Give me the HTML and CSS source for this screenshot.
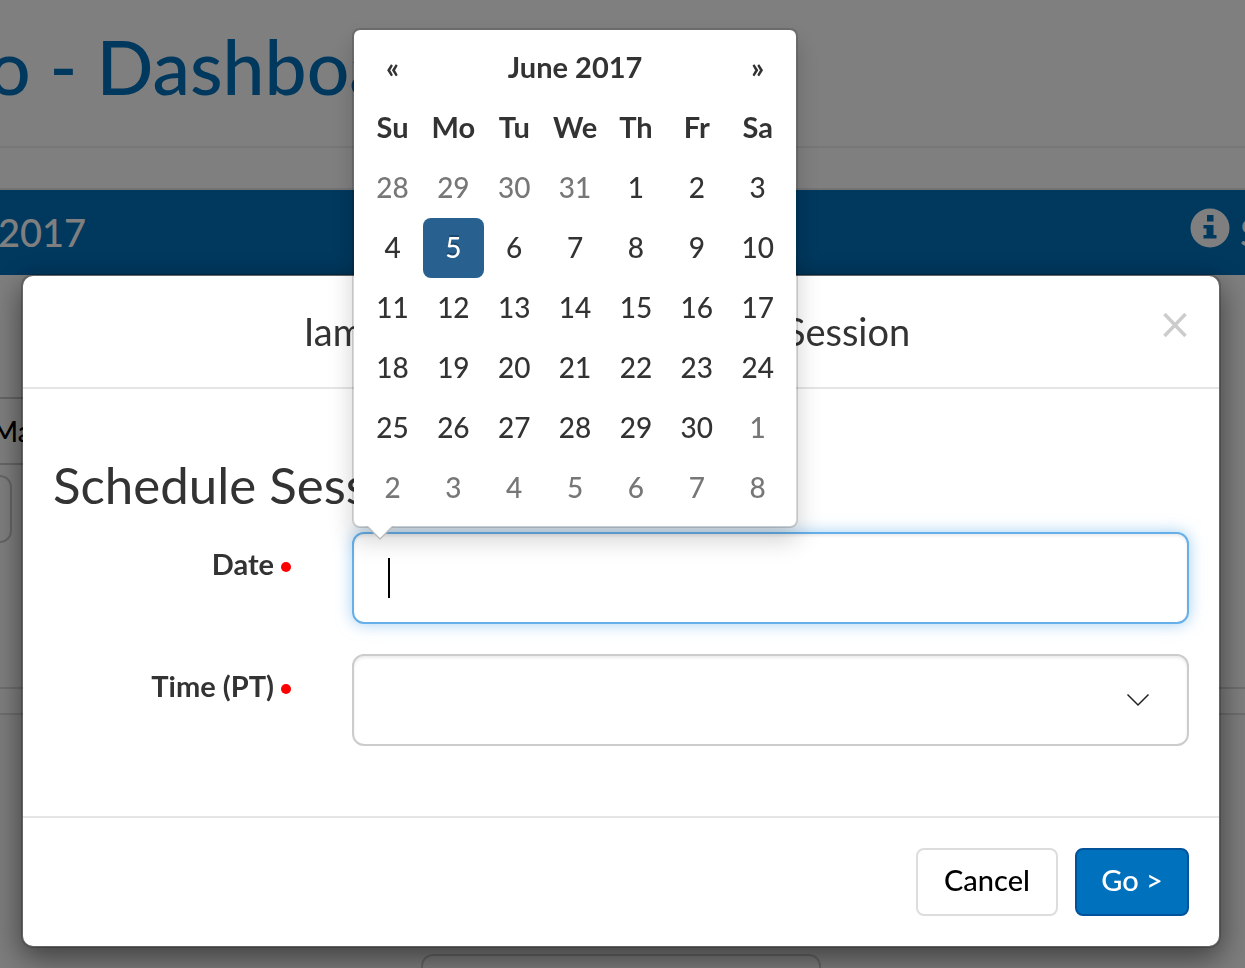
FILE: index.html
```html
<!DOCTYPE html>
<html lang="en">
<head>
    <meta charset="UTF-8">
    <meta name="viewport" content="width=device-width, initial-scale=1.0">
    <title>Dashboard - Schedule Session</title>
    <link rel="stylesheet" href="styles.css">
</head>
<body>
    <!-- Dashboard behind the modal -->
    <div class="page">
        <header class="page-header">
            <h1>o - Dashboard</h1>
        </header>
        <div class="week-bar">
            <span>2017</span>
            <span class="week-info">
                <svg class="info-icon" viewBox="0 0 40 40" aria-hidden="true">
                    <circle cx="20" cy="20" r="19.5" fill="#fff"/>
                    <path fill="#0071bc" d="M17 7h6.500v6.500H17zM13.500 17h10v10h3v3.500H13.500V27h3v-6.500h-3z"/>
                </svg>
                Session
            </span>
        </div>
        <section class="panel">
            <div class="panel-row">Manage</div>
            <div class="panel-box"></div>
        </section>
        <div class="panel-gap"></div>
        <section class="panel-lower">
            <div class="lower-box"></div>
        </section>
    </div>

    <!-- Schedule session modal -->
    <div class="modal">
        <div class="modal-content" role="dialog" aria-labelledby="modal-title">
            <div class="modal-header">
                <h2 id="modal-title">Iamdemo Users - Schedule a Session</h2>
                <button type="button" class="close" aria-label="Close">
                    <svg viewBox="0 0 24 24" aria-hidden="true">
                        <path d="M1.500 1 22.500 23M22.500 1 1.500 23" stroke="#ccc" stroke-width="3.500"/>
                    </svg>
                </button>
            </div>
            <form id="session-form" class="modal-body">
                <h3>Schedule Session</h3>
                <div class="form-group">
                    <label for="date">Date <span class="required"></span></label>
                    <div class="field">
                        <input type="text" id="date" class="form-control focused" autocomplete="off">

                        <!-- Datepicker -->
                        <div class="datepicker">
                            <table>
                                <thead>
                                    <tr>
                                        <th><button type="button" aria-label="Previous month">«</button></th>
                                        <th colspan="5"><button type="button">June 2017</button></th>
                                        <th><button type="button" aria-label="Next month">»</button></th>
                                    </tr>
                                    <tr>
                                        <th>Su</th>
                                        <th>Mo</th>
                                        <th>Tu</th>
                                        <th>We</th>
                                        <th>Th</th>
                                        <th>Fr</th>
                                        <th>Sa</th>
                                    </tr>
                                </thead>
                                <tbody>
                                    <tr>
                                        <td><button type="button" class="other">28</button></td>
                                        <td><button type="button" class="other">29</button></td>
                                        <td><button type="button" class="other">30</button></td>
                                        <td><button type="button" class="other">31</button></td>
                                        <td><button type="button">1</button></td>
                                        <td><button type="button">2</button></td>
                                        <td><button type="button">3</button></td>
                                    </tr>
                                    <tr>
                                        <td><button type="button">4</button></td>
                                        <td><button type="button" class="active">5</button></td>
                                        <td><button type="button">6</button></td>
                                        <td><button type="button">7</button></td>
                                        <td><button type="button">8</button></td>
                                        <td><button type="button">9</button></td>
                                        <td><button type="button">10</button></td>
                                    </tr>
                                    <tr>
                                        <td><button type="button">11</button></td>
                                        <td><button type="button">12</button></td>
                                        <td><button type="button">13</button></td>
                                        <td><button type="button">14</button></td>
                                        <td><button type="button">15</button></td>
                                        <td><button type="button">16</button></td>
                                        <td><button type="button">17</button></td>
                                    </tr>
                                    <tr>
                                        <td><button type="button">18</button></td>
                                        <td><button type="button">19</button></td>
                                        <td><button type="button">20</button></td>
                                        <td><button type="button">21</button></td>
                                        <td><button type="button">22</button></td>
                                        <td><button type="button">23</button></td>
                                        <td><button type="button">24</button></td>
                                    </tr>
                                    <tr>
                                        <td><button type="button">25</button></td>
                                        <td><button type="button">26</button></td>
                                        <td><button type="button">27</button></td>
                                        <td><button type="button">28</button></td>
                                        <td><button type="button">29</button></td>
                                        <td><button type="button">30</button></td>
                                        <td><button type="button" class="other">1</button></td>
                                    </tr>
                                    <tr>
                                        <td><button type="button" class="other">2</button></td>
                                        <td><button type="button" class="other">3</button></td>
                                        <td><button type="button" class="other">4</button></td>
                                        <td><button type="button" class="other">5</button></td>
                                        <td><button type="button" class="other">6</button></td>
                                        <td><button type="button" class="other">7</button></td>
                                        <td><button type="button" class="other">8</button></td>
                                    </tr>
                                </tbody>
                            </table>
                        </div>
                    </div>
                </div>
                <div class="form-group">
                    <label for="time">Time (PT) <span class="required"></span></label>
                    <div class="field">
                        <select id="time" class="form-control">
                            <option value=""></option>
                        </select>
                        <svg class="chevron" viewBox="0 0 24 14" aria-hidden="true">
                            <path d="M1.500 1.500 12 12 22.500 1.500" fill="none" stroke="#222" stroke-width="1.500"/>
                        </svg>
                    </div>
                </div>
            </form>
            <div class="modal-footer">
                <button type="button" class="btn btn-default">Cancel</button>
                <button type="submit" form="session-form" class="btn btn-primary">Go &gt;</button>
            </div>
        </div>
    </div>
</body>
</html>
```
FILE: styles.css
```css
* {
    margin: 0;
    padding: 0;
    box-sizing: border-box;
}

body {
    font-family: Lato, "Open Sans", sans-serif;
    font-size: 28px;
    font-weight: 500;
    line-height: 40px;
    color: #333;
    background-color: #fff;
    overflow: hidden;
}

button,
input,
select {
    font: inherit;
    color: inherit;
}

button {
    border: none;
    background: none;
    cursor: pointer;
}

/* Dashboard */
.page {
    height: 100vh;
    margin-left: -12px;
    overflow: hidden;
}

.page-header {
    height: 148px;
    padding-top: 22px;
    border-bottom: 2px solid #eee;
}

h1 {
    font-size: 75px;
    line-height: 88px;
    font-weight: 500;
    color: #0071bc;
    white-space: nowrap;
}

.week-bar {
    display: flex;
    justify-content: space-between;
    align-items: center;
    height: 87px;
    margin-top: 40px;
    padding: 0 0 2px 10px;
    border-top: 2px solid #e7e7e7;
    background-color: #0071bc;
    background-clip: padding-box;
    color: #fff;
    font-size: 38px;
}

.week-info {
    display: flex;
    align-items: center;
    gap: 10px;
    width: 55px;
    white-space: nowrap;
}

.info-icon {
    flex: none;
    width: 40px;
    height: 40px;
    margin-bottom: 8px;
}

.panel {
    height: 414px;
    padding-top: 122px;
    border-bottom: 2px solid #ddd;
}

.panel-row {
    width: 90%;
    height: 68px;
    padding: 12px 4px;
    border: solid #ccc;
    border-width: 2px 0;
    color: #000;
}

.panel-box {
    width: 24px;
    height: 68px;
    margin-top: 10px;
    border: 2px solid #ccc;
    border-radius: 12px;
}

.panel-gap {
    height: 24px;
}

.panel-lower {
    height: 300px;
    padding: 239px 0 0 8px;
    border-top: 2px solid #ddd;
    background-color: #fafafa;
}

.lower-box {
    width: 400px;
    height: 68px;
    margin: 0 auto;
    border: 2px solid #ccc;
    border-radius: 12px;
}

/* Modal */
.modal {
    position: fixed;
    inset: 0;
    padding: 274px 24px 0 21px;
    background-color: rgba(0, 0, 0, 0.5);
}

.modal-content {
    background-color: #fff;
    background-clip: padding-box;
    border: 2px solid rgba(0, 0, 0, 0.2);
    border-radius: 12px;
    box-shadow: 0 10px 30px rgba(0, 0, 0, 0.5);
}

.modal-header {
    display: flex;
    align-items: flex-start;
    padding: 30px;
    border-bottom: 2px solid #e5e5e5;
}

h2 {
    flex: 1;
    font-size: 38px;
    line-height: 51px;
    font-weight: 400;
    text-align: center;
}

.close {
    width: 28px;
    height: 38px;
}

.close svg {
    display: block;
    width: 24px;
    height: 24px;
    margin: 0 auto;
}

.modal-body {
    padding: 68px 30px 70px;
}

h3 {
    margin-bottom: 19px;
    font-size: 51px;
    line-height: 56px;
    font-weight: 400;
}

.form-group {
    display: grid;
    grid-template-columns: 2fr 7fr;
    gap: 60px;
}

.form-group + .form-group {
    margin-top: 30px;
}

label {
    padding-top: 12px;
    font-size: 29px;
    font-weight: 700;
    text-align: right;
}

.required {
    display: inline-block;
    width: 10px;
    height: 10px;
    margin: 0 1px 2px 0;
    border-radius: 50%;
    background-color: #f00;
    vertical-align: middle;
}

.field {
    position: relative;
}

.form-control {
    display: block;
    width: 100%;
    height: 92px;
    padding: 24px 34px;
    border: 2px solid #ccc;
    border-radius: 12px;
    outline: none;
    background-color: #fff;
    box-shadow: inset 0 2px 3px rgba(0, 0, 0, 0.08);
    appearance: none;
}

.form-control.focused {
    border-color: #66afe9;
    background: linear-gradient(#000, #000) 34px center / 2px 40px no-repeat #fff;
    box-shadow: inset 0 2px 3px rgba(0, 0, 0, 0.08), 0 0 16px rgba(102, 175, 233, 0.6);
}

.chevron {
    position: absolute;
    top: 39px;
    right: 39px;
    width: 24px;
    height: 14px;
    pointer-events: none;
}

.modal-footer {
    display: flex;
    justify-content: flex-end;
    gap: 17px;
    padding: 30px;
    border-top: 2px solid #e5e5e5;
}

.btn {
    height: 68px;
    padding: 0 20px 4px;
    border: 2px solid #ddd;
    border-radius: 8px;
    font-size: 29px;
}

.btn-default {
    min-width: 142px;
    background-color: #fff;
    color: #000;
}

.btn-primary {
    min-width: 114px;
    border-color: #00529b;
    background-color: #0071bc;
    color: #fff;
}

/* Datepicker */
.datepicker {
    position: absolute;
    left: 0;
    bottom: calc(100% + 4px);
    z-index: 10;
    padding: 8px;
    border: 2px solid rgba(0, 0, 0, 0.15);
    border-radius: 8px;
    background-color: #fff;
    background-clip: padding-box;
    box-shadow: 0 12px 24px rgba(0, 0, 0, 0.18);
}

.datepicker::before,
.datepicker::after {
    content: "";
    position: absolute;
    top: 100%;
    left: 12px;
    border: 14px solid transparent;
    border-bottom: none;
    border-top-color: #bbb;
}

.datepicker::after {
    left: 14px;
    border-width: 12px;
    border-bottom: none;
    border-top-color: #fff;
}

.datepicker table {
    width: 426px;
    border-collapse: collapse;
    text-align: center;
}

.datepicker th,
.datepicker td {
    min-width: 60px;
    height: 60px;
}

.datepicker th {
    padding-bottom: 2px;
    font-size: 29px;
    font-weight: 700;
}

.datepicker tr:first-child th {
    padding: 0;
}

.datepicker button {
    display: block;
    width: 100%;
    height: 60px;
    padding-bottom: 2px;
    border-radius: 8px;
}

.datepicker .other {
    color: #777;
}

.datepicker .active {
    background-color: #286090;
    color: #fff;
    text-shadow: 0 -2px 0 rgba(0, 0, 0, 0.25);
}
```
